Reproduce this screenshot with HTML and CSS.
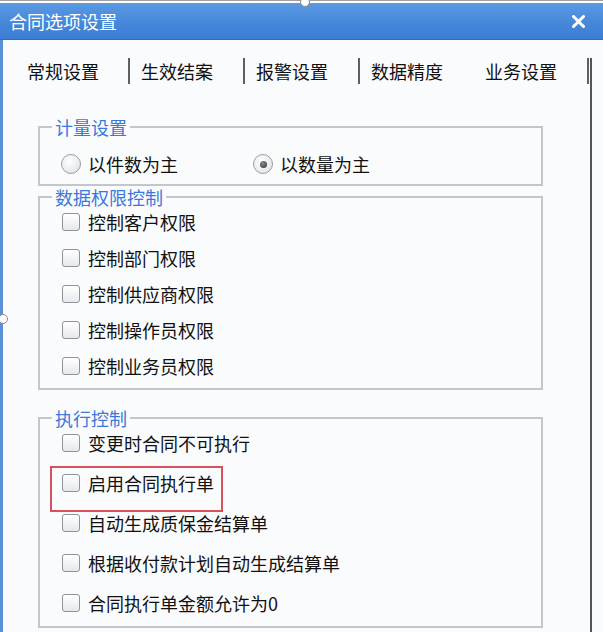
FILE: index.html
```html
<!DOCTYPE html>
<html lang="zh-CN">

<head>
  <meta charset="UTF-8">
  <meta name="viewport" content="width=device-width, initial-scale=1.0">
  <title>合同选项设置</title>
  <link rel="stylesheet" href="styles.css">
</head>

<body>

  <div class="window">
    <span class="handle handle-top"></span>
    <span class="handle handle-left"></span>

    <div class="titlebar">
      <span class="title">合同选项设置</span>
      <svg class="close" width="13" height="13" viewBox="0 0 13 13">
        <path d="M1.5 1.5 L11.5 11.5 M11.5 1.5 L1.5 11.5" stroke="#fff" stroke-width="3" stroke-linecap="round" />
      </svg>
    </div>

    <div class="frame">
      <div class="page">
        <div class="tabs">
          <span class="tab first">常规设置</span>
          <span class="tab">生效结案</span>
          <span class="tab">报警设置</span>
          <span class="tab nosep">数据精度</span>
          <span class="tab active">业务设置</span>
        </div>

        <fieldset class="group g1">
          <legend>计量设置</legend>
          <div class="opts radios">
            <label class="radio first"><span class="dot"></span>以件数为主</label>
            <label class="radio checked"><span class="dot"></span>以数量为主</label>
          </div>
        </fieldset>

        <fieldset class="group g2">
          <legend>数据权限控制</legend>
          <div class="opts">
            <label class="check"><span class="box"></span>控制客户权限</label>
            <label class="check"><span class="box"></span>控制部门权限</label>
            <label class="check"><span class="box"></span>控制供应商权限</label>
            <label class="check"><span class="box"></span>控制操作员权限</label>
            <label class="check"><span class="box"></span>控制业务员权限</label>
          </div>
        </fieldset>

        <fieldset class="group g3">
          <legend>执行控制</legend>
          <div class="opts">
            <label class="check"><span class="box"></span>变更时合同不可执行</label>
            <label class="check marked"><span class="box"></span>启用合同执行单<span class="mark"></span></label>
            <label class="check"><span class="box"></span>自动生成质保金结算单</label>
            <label class="check"><span class="box"></span>根据收付款计划自动生成结算单</label>
            <label class="check"><span class="box"></span>合同执行单金额允许为0</label>
          </div>
        </fieldset>
      </div>
    </div>
  </div>

</body>

</html>
```

FILE: styles.css
```css
body {
  margin: 0;
  width: 603px;
  height: 632px;
  overflow: hidden;
  background: #ffffff;
  font-family: "Noto Sans CJK SC", "Noto Sans", sans-serif;
  font-size: 18px;
  color: #111;
}

.window {
  position: relative;
  height: 632px;
  box-sizing: border-box;
  padding-top: 2px;
  border-top: 1px solid #a0a0a0;
  display: flex;
  flex-direction: column;
}

/* selection handles from the screen capture */
.handle {
  position: absolute;
  width: 8px;
  height: 8px;
  border-radius: 50%;
  background: #fff;
  border: 1px solid #8a8a8a;
}

.handle-top {
  left: 300px;
  top: -4px;
}

.handle-left {
  left: -2px;
  top: 313px;
}

.titlebar {
  height: 37px;
  flex: none;
  display: flex;
  align-items: center;
  justify-content: space-between;
  padding: 0 18px 0 9px;
  background: linear-gradient(#5a9ae2, #4687da 55%, #3c7ed3);
  border-bottom: 1px solid #2f6cbf;
  box-sizing: border-box;
}

.title {
  color: #fff;
  font-size: 18px;
}

.frame {
  flex: 1;
  border-left: 3px solid #5b8fd6;
  background: #fafbfd;
  overflow: hidden;
}

.page {
  margin-top: 18px;
  width: 587px;
  height: 600px;
  border-right: 2px solid #555;
}

.tabs {
  display: flex;
  height: 26px;
  line-height: 26px;
}

.tab {
  padding: 0 30px 0 11px;
  border-right: 2px solid #606060;
  white-space: nowrap;
}

.tab.first {
  padding-left: 24px;
  padding-right: 29px;
}

.tab.nosep {
  border-right: none;
}

.tab.active {
  padding-left: 12px;
}

.group {
  margin: 0 0 0 35px;
  padding: 0;
  width: 505px;
  box-sizing: border-box;
  min-inline-size: 0;
  border: 2px solid #c3c6ce;
}

.group legend {
  margin-left: 12px;
  padding: 0 3px;
  line-height: 14px;
  color: #3b78dc;
}

.g1 {
  margin-top: 36px;
}

.g2 {
  margin-top: 4px;
}

.g3 {
  margin-top: 21px;
}

.opts {
  padding-left: 22px;
}

.radios {
  display: flex;
  align-items: center;
  height: 36px;
  padding-top: 12px;
  padding-bottom: 2px;
}

.radio {
  display: flex;
  align-items: center;
  gap: 7px;
  margin-left: -1px;
}

.radio.first {
  margin-right: 76px;
}

.dot {
  width: 18px;
  height: 18px;
  border-radius: 50%;
  border: 1px solid #9a9ea6;
  background: radial-gradient(circle at 40% 35%, #ffffff, #e4e6ea 75%);
  display: flex;
  align-items: center;
  justify-content: center;
}

.radio.checked .dot::after {
  content: "";
  width: 7px;
  height: 7px;
  border-radius: 50%;
  background: radial-gradient(circle at 40% 35%, #8a8a8a, #333);
}

.g2 .opts {
  padding-bottom: 4px;
}

.g3 .opts {
  margin-top: -2px;
  padding-bottom: 3px;
}

.check {
  display: flex;
  align-items: center;
  gap: 8px;
  height: 36px;
  white-space: nowrap;
}

.g3 .check {
  height: 40px;
}

.box {
  width: 16px;
  height: 16px;
  border: 1px solid #8d929b;
  border-radius: 3px;
  background: linear-gradient(#ffffff, #e6e8ec);
}

.check.marked {
  position: relative;
}

.mark {
  position: absolute;
  left: -12px;
  top: 3px;
  width: 173px;
  height: 46px;
  box-sizing: border-box;
  border: 2px solid #d9505a;
}
```
